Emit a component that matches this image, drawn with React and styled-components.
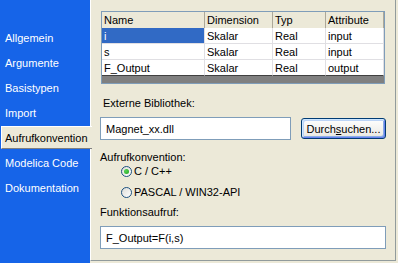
import React from 'react';
import styled, { createGlobalStyle, css } from 'styled-components';

const Global = createGlobalStyle`
  html, body { margin: 0; padding: 0; background: #ECE9D8; }
  body { font-family: "Liberation Sans", Arial, sans-serif; font-size: 11px; color: #000; }
  * { box-sizing: border-box; }
`;

const Window = styled.div`
  display: flex;
  width: 398px;
  height: 263px;
  background: #ECE9D8;
  overflow: hidden;
`;

const Sidebar = styled.nav`
  width: 90px;
  flex: none;
  background: #1664E8;
  padding-top: 25px;
  display: flex;
  flex-direction: column;
  position: relative;
  z-index: 1;
`;

const Tab = styled.div`
  height: 25px;
  display: flex;
  align-items: center;
  padding-left: 5px;
  color: #fff;
  white-space: nowrap;
  ${p => p.$active && css`
    height: 23px;
    margin: 1px -2px 1px 1px;
    padding-left: 3px;
    background: #ECE9D8;
    color: #000;
    border-top: 1px solid #fff;
    border-left: 1px solid #fff;
    border-bottom: 1px solid #808080;
  `}
`;

const Panel = styled.main`
  width: 306px;
  height: 261px;
  flex: none;
  border-left: 1px solid #fff;
  border-right: 1px solid #919B9C;
  border-bottom: 1px solid #919B9C;
  padding: 11px 0 0 9px;
  display: flex;
  flex-direction: column;
`;

const Table = styled.div`
  margin-left: 1px;
  width: 284px;
  border: 1px solid #7F9DB9;
  background: #808080;
  display: grid;
  grid-template-columns: 103px 68px 53px 58px;
  grid-auto-rows: 16px;
  padding-bottom: 7px;
`;

const HeadCell = styled.div`
  height: 17px;
  background: #ECE9D8;
  border-right: 1px solid #ACA899;
  border-bottom: 1px solid #ACA899;
  padding-left: 2px;
  display: flex;
  align-items: center;
  white-space: nowrap;
`;

const Cell = styled.div`
  background: ${p => (p.$selected ? '#316AC5' : '#fff')};
  color: ${p => (p.$selected ? '#fff' : '#000')};
  border-right: 1px solid #E0DFE3;
  border-bottom: 1px solid ${p => (p.$last ? '#404040' : '#E0DFE3')};
  padding-left: 2px;
  display: flex;
  align-items: center;
  white-space: nowrap;
`;

const Label = styled.div`
  height: 13px;
  line-height: 13px;
  margin-top: ${p => p.$mt}px;
  padding-left: ${p => p.$pl || 0}px;
`;

const FieldRow = styled.div`
  display: flex;
  align-items: center;
  gap: 10px;
  margin-top: 7px;
`;

const Input = styled.div`
  width: ${p => p.$w}px;
  height: 23px;
  border: 1px solid #7F9DB9;
  background: #fff;
  padding-left: 5px;
  display: flex;
  align-items: center;
  flex: none;
`;

const Button = styled.button`
  width: 85px;
  height: 21px;
  border: 1px solid #003C74;
  border-radius: 3px;
  background: linear-gradient(#FFFFFF, #ECEBE6 85%, #D6D0C5);
  box-shadow: inset 1px 1px 0 #CEE7FF, inset -1px -1px 0 #6982EE, inset 2px 2px 0 #BCD4F6, inset -2px -2px 0 #89ADE4;
  font: inherit;
  color: #000;
  padding: 0;
  display: flex;
  align-items: center;
  justify-content: center;
  flex: none;
  u { text-decoration: underline; }
`;

const RadioGroup = styled.div`
  display: flex;
  flex-direction: column;
  gap: 5px;
  margin-top: -1px;
  padding-left: 21px;
`;

const RadioRow = styled.div`
  height: 16px;
  display: flex;
  align-items: center;
  gap: 2px;
`;

const RadioCircle = styled.span`
  width: 11px;
  height: 11px;
  border-radius: 50%;
  border: 1px solid #1C5180;
  background: linear-gradient(135deg, #DCDCD7, #FFFFFF);
  display: inline-flex;
  align-items: center;
  justify-content: center;
  flex: none;
`;

const Dot = styled.span`
  width: 5px;
  height: 5px;
  border-radius: 50%;
  background: radial-gradient(circle at 35% 35%, #55D455, #21A121);
`;

const tabs = ['Allgemein', 'Argumente', 'Basistypen', 'Import', 'Aufrufkonvention', 'Modelica Code', 'Dokumentation'];
const rows = [
  ['i', 'Skalar', 'Real', 'input'],
  ['s', 'Skalar', 'Real', 'input'],
  ['F_Output', 'Skalar', 'Real', 'output'],
];

export default function App() {
  return (
    <Window>
      <Global />
      <Sidebar>
        {tabs.map(t => (
          <Tab key={t} $active={t === 'Aufrufkonvention'}>{t}</Tab>
        ))}
      </Sidebar>
      <Panel>
        <Table>
          {['Name', 'Dimension', 'Typ', 'Attribute'].map(h => <HeadCell key={h}>{h}</HeadCell>)}
          {rows.map((r, ri) =>
            r.map((c, ci) => (
              <Cell key={ri + '-' + ci} $selected={ri === 0 && ci === 0} $last={ri === rows.length - 1}>{c}</Cell>
            ))
          )}
        </Table>
        <Label $mt={13} $pl={3}>Externe Bibliothek:</Label>
        <FieldRow>
          <Input $w={191}>Magnet_xx.dll</Input>
          <Button>Durch<u>s</u>uchen...</Button>
        </FieldRow>
        <Label $mt={11}>Aufrufkonvention:</Label>
        <RadioGroup>
          <RadioRow><RadioCircle><Dot /></RadioCircle>C / C++</RadioRow>
          <RadioRow><RadioCircle />PASCAL / WIN32-API</RadioRow>
        </RadioGroup>
        <Label $mt={6}>Funktionsaufruf:</Label>
        <FieldRow>
          <Input $w={286}>F_Output=F(i,s)</Input>
        </FieldRow>
      </Panel>
    </Window>
  );
}
